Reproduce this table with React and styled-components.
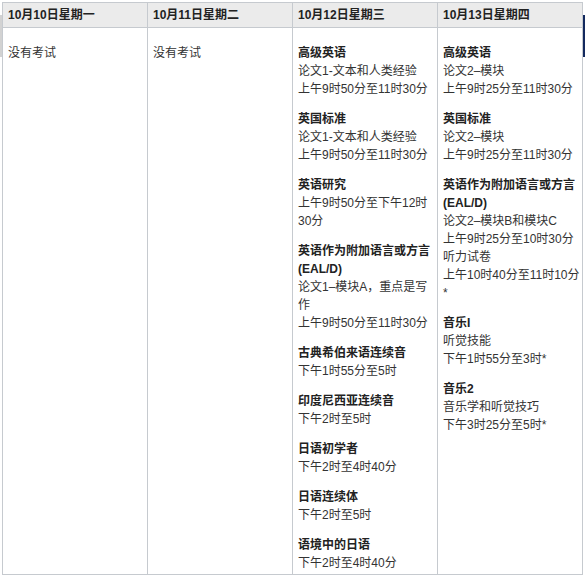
import React from "react";
import styled, { createGlobalStyle } from "styled-components";

const Global = createGlobalStyle`
  html, body { margin: 0; padding: 0; background: #fff; }
  body {
    font-family: "Liberation Sans", "Noto Sans CJK SC", sans-serif;
    font-size: 12px;
    color: #333;
  }
`;

const Page = styled.div`
  position: relative;
  padding: 2px;
  width: 585px;
  height: 577px;
  box-sizing: border-box;
  overflow: hidden;
`;

const EdgeMark = styled.div`
  position: absolute;
  top: 15px;
  height: 42px;
  width: 2px;
  ${(p) => (p.$side === "left" ? "left: 0;" : "right: 0;")}
  background: ${(p) => p.$color};
`;

const Grid = styled.div`
  display: grid;
  grid-template-columns: repeat(4, 145px);
  width: 581px;
  box-sizing: border-box;
  border-top: 1px solid #c6cacf;
  border-left: 1px solid #c6cacf;
`;

const HeadCell = styled.div`
  box-sizing: border-box;
  background: #ebebeb;
  border-right: 1px solid #c6cacf;
  border-bottom: 1px solid #c6cacf;
  padding: 3px 5px;
  font-weight: bold;
  color: #222;
  line-height: 18px;
  white-space: nowrap;
`;

const BodyCell = styled.div`
  box-sizing: border-box;
  border-right: 1px solid #c6cacf;
  border-bottom: 1px solid #c6cacf;
  padding: 4px 5px 2px;
`;

const Block = styled.div`
  margin-top: 12px;
`;

const Line = styled.div`
  line-height: 18px;
  white-space: nowrap;
  color: ${(p) => (p.$title ? "#222" : "#333")};
  font-weight: ${(p) => (p.$title ? "bold" : "normal")};
`;

const days = [
  { head: "10月10日星期一", blocks: [{ title: [], lines: ["没有考试"] }] },
  { head: "10月11日星期二", blocks: [{ title: [], lines: ["没有考试"] }] },
  {
    head: "10月12日星期三",
    blocks: [
      { title: ["高级英语"], lines: ["论文1-文本和人类经验", "上午9时50分至11时30分"] },
      { title: ["英国标准"], lines: ["论文1-文本和人类经验", "上午9时50分至11时30分"] },
      { title: ["英语研究"], lines: ["上午9时50分至下午12时", "30分"] },
      {
        title: ["英语作为附加语言或方言", "(EAL/D)"],
        lines: ["论文1–模块A，重点是写", "作", "上午9时50分至11时30分"],
      },
      { title: ["古典希伯来语连续音"], lines: ["下午1时55分至5时"] },
      { title: ["印度尼西亚连续音"], lines: ["下午2时至5时"] },
      { title: ["日语初学者"], lines: ["下午2时至4时40分"] },
      { title: ["日语连续体"], lines: ["下午2时至5时"] },
      { title: ["语境中的日语"], lines: ["下午2时至4时40分"] },
    ],
  },
  {
    head: "10月13日星期四",
    blocks: [
      { title: ["高级英语"], lines: ["论文2–模块", "上午9时25分至11时30分"] },
      { title: ["英国标准"], lines: ["论文2–模块", "上午9时25分至11时30分"] },
      {
        title: ["英语作为附加语言或方言", "(EAL/D)"],
        lines: [
          "论文2–模块B和模块C",
          "上午9时25分至10时30分",
          "听力试卷",
          "上午10时40分至11时10分",
          "*",
        ],
      },
      { title: ["音乐I"], lines: ["听觉技能", "下午1时55分至3时*"] },
      { title: ["音乐2"], lines: ["音乐学和听觉技巧", "下午3时25分至5时*"] },
    ],
  },
];

export default function App() {
  return (
    <>
      <Global />
      <Page>
        <EdgeMark $side="left" $color="#d2d2d2" />
        <EdgeMark $side="right" $color="#13295e" />
        <Grid>
          {days.map((d) => (
            <HeadCell key={d.head}>{d.head}</HeadCell>
          ))}
          {days.map((d) => (
            <BodyCell key={d.head + "-body"}>
              {d.blocks.map((b, i) => (
                <Block key={i}>
                  {b.title.map((t) => (
                    <Line $title key={t}>
                      {t}
                    </Line>
                  ))}
                  {b.lines.map((l, j) => (
                    <Line key={j}>{l}</Line>
                  ))}
                </Block>
              ))}
            </BodyCell>
          ))}
        </Grid>
      </Page>
    </>
  );
}
